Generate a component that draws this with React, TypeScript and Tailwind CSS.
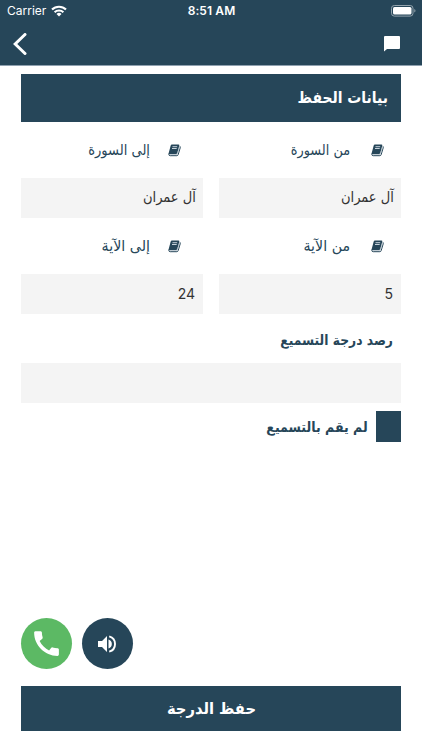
import React from 'react';
import { MdCall } from 'react-icons/md';

// --- Icons ---
const WifiIcon = () => (
  <svg width="16" height="12" viewBox="0 0 16 12" fill="none" stroke="white" strokeWidth="2.1">
    <path d="M1 4.6a10 10 0 0 1 14 0" />
    <path d="M3.6 7.3a6.3 6.3 0 0 1 8.8 0" />
    <path d="M8 11.5 5.5 9a3.6 3.6 0 0 1 5 0Z" fill="white" stroke="none" />
  </svg>
);

const BatteryIcon = () => (
  <svg width="25" height="12" viewBox="0 0 25 12">
    <rect x="0.5" y="0.5" width="21.5" height="10.6" rx="2.8" fill="none" stroke="#93a3ad" />
    <rect x="2" y="2" width="18.5" height="7.6" rx="1.5" fill="white" />
    <path d="M23.3 4v3.6c1.6-.6 1.6-3 0-3.6Z" fill="#93a3ad" />
  </svg>
);

const BackIcon = () => (
  <svg width="14" height="22" viewBox="0 0 14 22" fill="none" stroke="white" strokeWidth="3">
    <path d="M12 1.5 2.2 11 12 20.5" strokeLinecap="round" />
  </svg>
);

const ChatIcon = () => (
  <svg width="16" height="16" viewBox="0 0 16 16" fill="white">
    <path d="M1 0h14a1 1 0 0 1 1 1v11a1 1 0 0 1-1 1H3L0 15.6V1a1 1 0 0 1 1-1Z" />
  </svg>
);

const VolumeIcon = () => (
  <svg width="20" height="20" viewBox="0 0 20 20" fill="white">
    <path d="M1 7h4l5-5v16l-5-5H1Z" />
    <path d="M11.5 5.5a4.7 4.7 0 0 1 0 9Z" />
    <path d="M12.2 2.3a8 8 0 0 1 0 15.4" fill="none" stroke="white" strokeWidth="1.9" />
  </svg>
);

const BookIcon = () => (
  <svg width="13" height="13" viewBox="0 0 13 13" fill="currentColor">
    <path d="M3.9.6h6.500q1.200 0 .9 1.100L9.300 9q-.3 1-1.300 1H1.200q-.8 0-.5-1L2.700 1.600Q3 .6 3.900.6Z" />
    <path d="M.9 9.400q-.5 2.300 1.300 2.300h6.700q.9 0 1.200-.9l2.200-7.300q.2-.8-.4-1.200" fill="none" stroke="currentColor" strokeWidth="1" />
    <path d="M4.500 2.700h4.700M4 4.500h4.700" stroke="#c5d1da" strokeWidth="1" />
    <path d="M1.600 10.500h6.700q.9 0 1.200-.9l2.100-7" fill="none" stroke="#a5b5c0" strokeWidth=".7" />
  </svg>
);
// ---

type FieldProps = {
  label: string;
  value: string;
  labelClass: string;
  textClass: string;
  numeric?: boolean;
};

const Field = ({ label, value, labelClass, textClass, numeric = false }: FieldProps) => (
  <div>
    <div className={`flex h-[56px] items-center ${labelClass}`}>
      <BookIcon />
      <span className={`origin-right text-[15px] ${textClass}`}>{label}</span>
    </div>
    <div
      className={`flex h-[40px] items-center bg-[#f4f4f4] text-[#333] ${
        numeric
          ? "px-2 pb-0.5 font-['Inter','Liberation_Sans',sans-serif] text-[14px]"
          : 'px-[7px] pb-0.5 text-[15px]'
      }`}
    >
      <span className={numeric ? '' : 'origin-right scale-x-[0.87]'}>{value}</span>
    </div>
  </div>
);

const App: React.FC = () => {
  return (
    <div
      dir="rtl"
      className="flex h-[750px] w-[422px] flex-col overflow-hidden bg-white font-['DejaVu_Sans',sans-serif] text-[#264659]"
    >
      {/* Status bar and navigation */}
      <header dir="ltr" className="h-[66px] shrink-0 border-b border-[#8fa1b0] bg-[#264659] text-white">
        <div className="grid h-[22px] grid-cols-3 items-center pl-[7px] pr-[6px] font-['Inter','Liberation_Sans',sans-serif] text-[12px]">
          <div className="flex items-center gap-[5px]">
            <span>Carrier</span>
            <WifiIcon />
          </div>
          <span className="text-center font-semibold tracking-[0.1px]">8:51 AM</span>
          <div className="flex justify-end">
            <BatteryIcon />
          </div>
        </div>
        <div className="flex h-[43px] items-center justify-between pl-[13px] pr-[22px]">
          <BackIcon />
          <ChatIcon />
        </div>
      </header>

      <main className="flex flex-1 flex-col px-[21px] pt-[8px]">
        <h1 className="flex h-[48px] items-center bg-[#264659] px-[13px] text-[16px] font-bold text-white">
          <span className="origin-right scale-x-[0.87]">بيانات الحفظ</span>
        </h1>

        {/* Surah and verse range */}
        <div className="grid grid-cols-2 gap-x-4">
          <Field label="من السورة" value="آل عمران" labelClass="gap-[21px] pr-[17px]" textClass="scale-x-[0.86]" />
          <Field label="إلى السورة" value="آل عمران" labelClass="gap-[18px] pr-[22px]" textClass="scale-x-[0.87]" />
          <Field label="من الآية" value="5" labelClass="gap-[21px] pr-[17px]" textClass="scale-x-[0.95]" numeric />
          <Field label="إلى الآية" value="24" labelClass="gap-[18px] pr-[22px]" textClass="scale-x-[0.95]" numeric />
        </div>

        <div className="flex h-[49px] items-center px-2 pt-1 text-[14px] font-bold">
          <span className="origin-right scale-x-[0.88]">رصد درجة التسميع</span>
        </div>
        <div className="h-[40px] bg-[#f4f4f4]" />

        <div className="mt-[8px] flex items-center gap-2 text-[14px] font-bold">
          <span className="h-[31px] w-[25px] bg-[#264659]" />
          <span className="origin-right scale-x-[0.9] pt-0.5">لم يقم بالتسميع</span>
        </div>

        {/* Actions */}
        <div dir="ltr" className="mt-auto flex gap-[10px]">
          <button className="flex size-[51px] items-center justify-center rounded-full bg-[#5cb964] text-white">
            <MdCall size={33} />
          </button>
          <button className="flex size-[51px] items-center justify-center rounded-full bg-[#264659] pr-px text-white">
            <VolumeIcon />
          </button>
        </div>
        <button className="mb-[19px] mt-[17px] flex h-[45px] items-center justify-center bg-[#264659] text-[16px] font-bold text-white">
          <span className="scale-x-[0.92]">حفظ الدرجة</span>
        </button>
      </main>
    </div>
  );
};

export default App;
